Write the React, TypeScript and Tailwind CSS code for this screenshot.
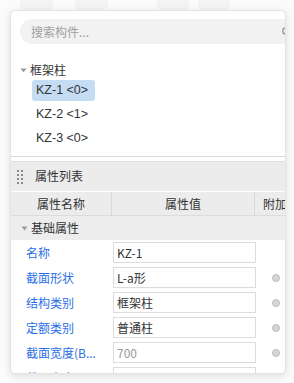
import React from "react";

const font = { fontFamily: '"Noto Sans CJK SC", "Noto Sans", sans-serif' };
const latin = { fontFamily: '"Liberation Sans", "Noto Sans CJK SC", sans-serif' };

function Tri() {
  return (
    <svg width="7" height="5" viewBox="0 0 7 5" className="shrink-0">
      <path d="M0.5 0.5 L6.5 0.5 L3.5 4.5 Z" fill="#9a9a9a" />
    </svg>
  );
}

function Grip() {
  return (
    <div className="grid grid-cols-2 gap-x-[2px] gap-y-[2px]">
      {Array.from({ length: 8 }).map((_, i) => (
        <div key={i} className="w-[2px] h-[2px] bg-[#8a8a8a]" />
      ))}
    </div>
  );
}

const rows: { label: string; value: string; muted?: boolean; dot?: boolean }[] = [
  { label: "名称", value: "KZ-1" },
  { label: "截面形状", value: "L-a形", dot: true },
  { label: "结构类别", value: "框架柱", dot: true },
  { label: "定额类别", value: "普通柱", dot: true },
  { label: "截面宽度(B...", value: "700", muted: true, dot: true },
  { label: "截面高度(H)", value: "700", muted: true, dot: true },
];

export default function App() {
  return (
    <div
      className="relative w-[294px] h-[383px] overflow-hidden bg-[#fbfbfb]"
      style={font}
    >
      {/* faint tabs above card */}
      <div className="absolute top-[-8px] left-[20px] w-[33px] h-[18px] rounded-[5px] bg-[#f4f4f4]" />
      <div className="absolute top-[-8px] left-[75px] w-[33px] h-[18px] rounded-[5px] bg-[#f4f4f4]" />
      <div className="absolute top-[-8px] left-[157px] w-[32px] h-[18px] rounded-[5px] bg-[#f4f4f4]" />
      <div className="absolute top-[-8px] left-[198px] w-[32px] h-[18px] rounded-[5px] bg-[#f4f4f4]" />

      <div className="absolute left-[10px] top-[10px] w-[276px] h-[364px] bg-white border border-[#e3e3e3] rounded-[5px] shadow-[0_2px_8px_rgba(0,0,0,0.12)] overflow-hidden flex flex-col">
        {/* tree section */}
        <div className="h-[146px] shrink-0 border-b border-[#dcdcdc] flex flex-col">
          <div className="mt-[8px] ml-[9px] w-[275px] h-[25px] rounded-full bg-[#f2f2f2] flex items-center pl-[11px]">
            <span className="text-[12px] text-[#a0a0a0] flex-1">搜索构件...</span>
            <svg width="9" height="9" viewBox="0 0 9 9" className="mr-[4px]">
              <circle cx="4" cy="4" r="3.2" fill="none" stroke="#8c8c8c" strokeWidth="1.2" />
              <path d="M6.4 6.4 L8.5 8.5" stroke="#8c8c8c" strokeWidth="1.2" />
            </svg>
          </div>
          <div className="mt-[16px] ml-[9px] flex items-center gap-[3px] h-[20px]">
            <Tri />
            <span className="text-[12px] text-[#333]">框架柱</span>
          </div>
          <div className="flex flex-col ml-[21px] mt-[0px] gap-[3px]" style={latin}>
            <div className="w-[63px] h-[21px] rounded-[3px] bg-[#c5ddf3] flex items-center pl-[4px]">
              <span className="text-[12.5px] text-[#333]">KZ-1 &lt;0&gt;</span>
            </div>
            <div className="h-[21px] flex items-center pl-[4px]">
              <span className="text-[12.5px] text-[#333]">KZ-2 &lt;1&gt;</span>
            </div>
            <div className="h-[21px] flex items-center pl-[4px]">
              <span className="text-[12.5px] text-[#333]">KZ-3 &lt;0&gt;</span>
            </div>
          </div>
        </div>

        {/* properties section */}
        <div className="mt-[4px] border-t border-[#dedede] flex flex-col">
          <div className="h-[30px] bg-[#ececec] flex items-center pl-[6px] gap-[12px] border-b border-white">
            <Grip />
            <span className="text-[12px] text-[#333] -mt-[2px]">属性列表</span>
          </div>
          <div className="h-[24px] bg-[#ececec] flex border-b border-[#dcdcdc]">
            <div className="w-[101px] shrink-0 flex items-center justify-center border-r border-[#d8d8d8] text-[12px] text-[#333]">
              属性名称
            </div>
            <div className="w-[143px] shrink-0 flex items-center justify-center border-r border-[#d8d8d8] text-[12px] text-[#333]">
              属性值
            </div>
            <div className="flex-1 flex items-center pl-[8px] text-[12px] text-[#333] whitespace-nowrap overflow-hidden">
              附加
            </div>
          </div>
          <div className="h-[24px] bg-[#ededed] flex items-center pl-[10px] gap-[3px]">
            <Tri />
            <span className="text-[12px] text-[#333]">基础属性</span>
          </div>
          {rows.map((r) => (
            <div key={r.label} className="h-[25px] shrink-0 flex items-center">
              <div className="w-[101px] shrink-0 pl-[15px] text-[12px] text-[#2a6fe8] whitespace-nowrap overflow-hidden">
                {r.label}
              </div>
              <div className="w-[143px] shrink-0 h-[21px] border border-[#dcdcdc] flex items-center pl-[3px] ml-[1px]">
                <span className={`text-[12px] ${r.muted ? "text-[#9a9a9a]" : "text-[#333]"}`}>{r.value}</span>
              </div>
              <div className="flex-1 flex justify-center pl-[10px]">
                {r.dot && <div className="w-[8px] h-[8px] rounded-full bg-[#d6d6d6] border border-[#bdbdbd]" />}
              </div>
            </div>
          ))}
        </div>
      </div>
    </div>
  );
}
